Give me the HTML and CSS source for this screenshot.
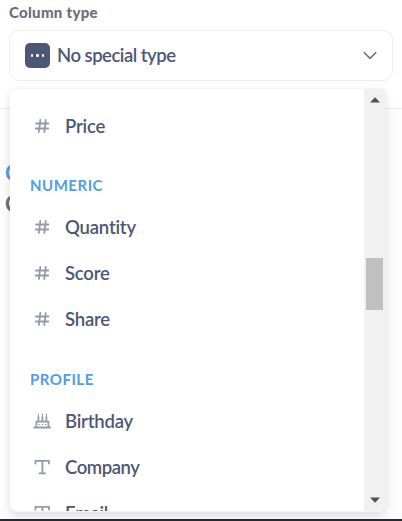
FILE: index.html
```html
<!DOCTYPE html>
<html lang="en">
<head>
<meta charset="utf-8">
<title>Column type</title>
<link rel="stylesheet" href="styles.css">
</head>
<body>
<svg class="defs" width="0" height="0" aria-hidden="true">
  <symbol id="hash" viewBox="0 0 18 18"><path d="M7.3 3 5.9 15M12.7 3 11.3 15M3 6.5h12.4M2.8 11.5h12.4"/></symbol>
  <symbol id="text" viewBox="0 0 18 18"><path d="M2.4 5.6V2.9h13.6v2.7M9.4 2.9v12.4M6.5 15.4h5.6"/></symbol>
  <symbol id="cake" viewBox="0 0 18 18"><path d="M1.2 15.5h16M3.4 15V9.6h12V15M5.4 9V5M9.4 9V5M13.4 9V5"/><path class="dots" d="M5.4 2.3v1M9.4 2.3v1M13.4 2.3v1M6 12.5h.6M9.1 12.5h.6M12.2 12.5h.6"/></symbol>
</svg>
<main class="page">
  <div class="label">Column type</div>
  <div class="select">
    <span class="badge"><i></i><i></i><i></i></span>
    <span class="value">No special type</span>
    <svg class="chevron" width="14" height="9" viewBox="0 0 14 9"><path d="M.8 1.2 7 7.4l6.2-6.2"/></svg>
  </div>
  <div class="backdrop"><span class="link">C</span><span class="heading">C</span></div>
  <div class="popover">
    <div class="list">
      <div class="item"><svg><use href="#hash"/></svg>Price</div>
      <div class="group">NUMERIC</div>
      <div class="item"><svg><use href="#hash"/></svg>Quantity</div>
      <div class="item"><svg><use href="#hash"/></svg>Score</div>
      <div class="item"><svg><use href="#hash"/></svg>Share</div>
      <div class="group second">PROFILE</div>
      <div class="item"><svg><use href="#cake"/></svg>Birthday</div>
      <div class="item tight"><svg><use href="#text"/></svg>Company</div>
      <div class="item"><svg><use href="#text"/></svg>Email</div>
    </div>
    <div class="scrollbar">
      <svg class="arrow" width="10" height="6" viewBox="0 0 10 6"><path d="M0 5.5 5 .2l5 5.3z"/></svg>
      <div class="thumb"></div>
      <svg class="arrow down" width="10" height="6" viewBox="0 0 10 6"><path d="M0 .5h10L5 5.8z"/></svg>
    </div>
  </div>
</main>
</body>
</html>
```
FILE: styles.css
```css
* { box-sizing: border-box; }
body { margin: 0; background: #fff; font-family: Lato, sans-serif; font-weight: 700; color: #4c5773; }
.defs { position: absolute; }
.page { position: relative; width: 402px; height: 521px; overflow: hidden; border-bottom: 2px solid #26292d; }
.label { height: 30px; padding-left: 9px; font-size: 15px; line-height: 25px; font-weight: 900; letter-spacing: .3px; color: #696e7b; }
.select { display: flex; align-items: center; width: 384px; height: 51px; margin-left: 9px; padding: 0 15px; border: 1px solid #eeecec; border-radius: 10px; background: #fff; }
.badge { display: flex; align-items: center; justify-content: center; gap: 3px; width: 25px; height: 25px; border-radius: 5px; background: #4c5773; }
.badge i { width: 2.5px; height: 2.5px; border-radius: 50%; background: #fff; }
.value { flex: 1; margin-left: 7px; font-size: 18.5px; line-height: 22px; font-weight: 600; letter-spacing: -.5px; padding-bottom: 1px; }
.chevron { fill: none; stroke: #696e7b; stroke-width: 1.5; }
.backdrop { height: 411px; margin-top: 27px; padding: 48px 0 0 5px; border-top: 1px solid #e8edf0; background: #fdfdfd; font-size: 22px; line-height: 31px; }
.backdrop span { display: block; }
.link { color: #509ee3; }
.heading { color: #696e7b; }
.popover { position: absolute; left: 10px; top: 88px; display: flex; width: 376px; height: 424px; overflow: hidden; border: 1px solid #f3f3f3; border-width: 1px 0; border-radius: 7px; background: #fff; box-shadow: 0 4px 10px rgba(0,0,0,.13); }
.list { flex: 1; padding-top: 14px; overflow: hidden; }
.item { display: flex; align-items: center; height: 46px; padding-left: 23px; font-size: 18.5px; font-weight: 600; letter-spacing: -.2px; font-variant-ligatures: none; }
.tight { letter-spacing: -.45px; }
.item svg { width: 18px; height: 18px; margin-right: 14px; fill: none; stroke: #949aab; stroke-width: 1.8; stroke-linecap: round; stroke-linejoin: round; }
.dots { stroke-width: 1.2; }
.group { height: 55px; padding: 25px 0 0 20px; font-size: 15px; line-height: 22px; letter-spacing: .5px; color: #509ee3; }
.second { height: 56px; padding-top: 26px; }
.scrollbar { display: flex; flex-direction: column; align-items: center; width: 22px; padding: 8px 1px 8px 0; background: #f1f1f1; }
.arrow { fill: #505050; }
.thumb { width: 17px; height: 52px; margin: 155px 0 auto; background: #c1c1c1; }
```
